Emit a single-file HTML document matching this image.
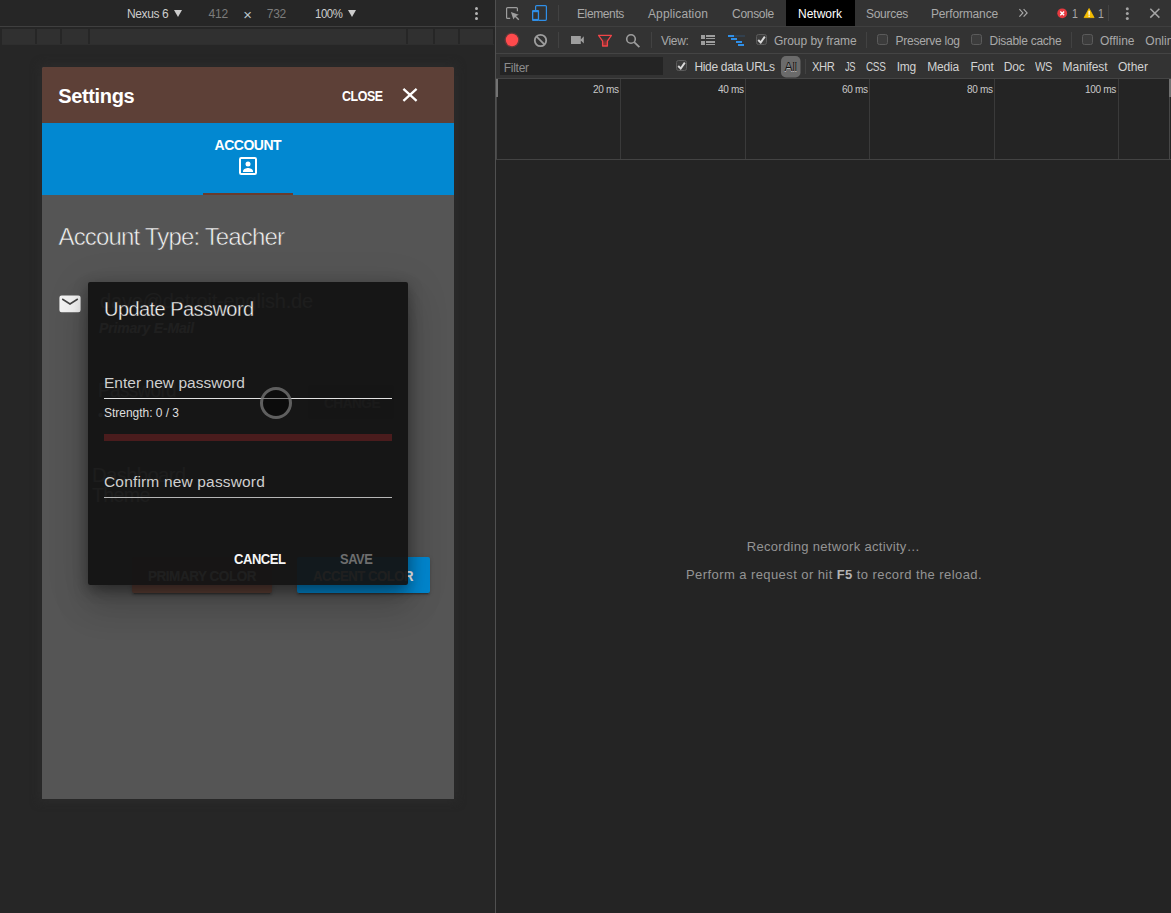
<!DOCTYPE html>
<html lang="en">
<head>
<meta charset="utf-8">
<title>Settings – Update Password (DevTools device mode)</title>
<style>
*{box-sizing:border-box;margin:0;padding:0}
html,body{width:1171px;height:913px;overflow:hidden;background:#262626}
body{position:relative;font-family:"Liberation Sans",sans-serif;-webkit-font-smoothing:antialiased}
.a{position:absolute}
.t{position:absolute;white-space:nowrap;line-height:20px;height:20px;font-family:"Liberation Sans",sans-serif}
.t b{font-weight:700}
#left{left:0;top:0;width:495px;height:913px;background:#262626;overflow:hidden}
#right{left:495px;top:0;width:676px;height:913px;background:#242424;border-left:1px solid #505050;overflow:hidden}
.seg{position:absolute;top:29px;height:15px;background:#303030}
.vsep{position:absolute;width:1px;background:#474747}
.cb{position:absolute;width:11px;height:11px;border:1px solid #5c5c5c;border-radius:2px;background:#3d3d3d}
.tri{position:absolute;width:0;height:0;border-left:4px solid transparent;border-right:4px solid transparent;border-top:7px solid #cdcdcd}
</style>
</head>
<body>
<!-- ================= LEFT: device emulation pane ================= -->
<div id="left" class="a">
  <div class="a" style="left:0;top:26px;width:495px;height:1px;background:#3f3f3f"></div>
  <!-- media query bar -->
  <div class="a" style="left:2px;top:44px;width:492px;height:1px;background:#2e2e2e"></div>
  <div class="seg" style="left:2px;width:33px"></div>
  <div class="seg" style="left:37px;width:23px"></div>
  <div class="seg" style="left:62px;width:26px"></div>
  <div class="seg" style="left:90px;width:316px"></div>
  <div class="seg" style="left:408px;width:25px"></div>
  <div class="seg" style="left:435px;width:23px"></div>
  <div class="seg" style="left:460px;width:33px"></div>
  <div class="tri" style="left:173.800px;top:9.700px"></div>
  <div class="tri" style="left:347.500px;top:9.700px"></div>
  <!-- kebab -->
  <svg class="a" style="left:474px;top:6px" width="5" height="15" viewBox="0 0 5 15"><circle cx="2.5" cy="2.5" r="1.5" fill="#b4b4b4"/><circle cx="2.5" cy="7.5" r="1.5" fill="#b4b4b4"/><circle cx="2.5" cy="12.5" r="1.5" fill="#b4b4b4"/></svg>

  <!-- device screen -->
  <div id="screen" class="a" style="left:42px;top:67px;width:412px;height:732px;background:#555555;border-radius:2px 2px 0 0;box-shadow:0 0 9px 3px rgba(44,44,44,.75);overflow:hidden">
    <div class="a" style="left:0;top:0;width:412px;height:56px;background:#5d4037"></div>
    <div class="a" style="left:0;top:56px;width:412px;height:72px;background:#0288d1"></div>
    <div class="a" style="left:161px;top:126px;width:90px;height:2px;background:#6a3b2d"></div>
    <!-- close X -->
    <svg class="a" style="left:356px;top:16px" width="24" height="24" viewBox="0 0 24 24"><path d="M5.400 5.900 L18.600 17.900 M18.600 5.900 L5.400 17.900" stroke="#fff" stroke-width="2.300" fill="none"/></svg>
    <!-- account box icon -->
    <svg class="a" style="left:194px;top:87px" width="24" height="24" viewBox="0 0 24 24"><rect x="4" y="4" width="16" height="16" rx="1.2" fill="none" stroke="#fff" stroke-width="2"/><circle cx="12" cy="10" r="2.500" fill="#fff"/><path d="M7 17.200 c0-2.300 3.300-3.200 5-3.200 s5 .9 5 3.200 V18 H7 Z" fill="#fff"/></svg>
    <!-- mail icon -->
    <svg class="a" style="left:17px;top:228px" width="22" height="18" viewBox="0 0 22 18"><rect x="0.4" y="0.6" width="21.2" height="16.6" rx="2.2" fill="#f4f4f4"/><path d="M3.2 4 L11 9 L18.8 4" stroke="#454545" stroke-width="1.5" fill="none"/></svg>
  </div>
</div>

<!-- underlying (ghost) page content, visible through the fading dialog -->
<div id="under" class="a" style="left:0;top:0;width:495px;height:913px;overflow:hidden">
  <div class="a" style="left:132px;top:557px;width:140px;height:36px;background:#5d4037;border-radius:2px;box-shadow:0 3px 1px -2px rgba(0,0,0,.2),0 2px 2px 0 rgba(0,0,0,.14),0 1px 5px 0 rgba(0,0,0,.12)"></div>
  <div class="a" style="left:297px;top:557px;width:133px;height:36px;background:#0288d1;border-radius:2px;box-shadow:0 3px 1px -2px rgba(0,0,0,.2),0 2px 2px 0 rgba(0,0,0,.14),0 1px 5px 0 rgba(0,0,0,.12)"></div>
  <div class="a" style="left:308px;top:384.500px;width:86px;height:34.500px;background:rgba(0,0,0,.2);border-radius:2px"></div>
<span class="t" id="g_mail" style="left:100.0px;top:291.0px;font-size:20px;color:#cfcfcf;letter-spacing:-0.179px;">dave@detroit-english.de</span>
<span class="t" id="g_prim" style="left:99.0px;top:318.0px;font-size:14px;color:#ffffff;font-weight:700;letter-spacing:-0.162px;font-style:italic;">Primary E-Mail</span>
<span class="t" id="g_pw" style="left:98.0px;top:380.0px;font-size:20px;color:#cfcfcf;letter-spacing:-0.700px;transform:scaleX(0.9488);transform-origin:0 50%;">Password</span>
<span class="t" id="g_dots" style="left:98.0px;top:405.0px;font-size:14px;color:#ffffff;letter-spacing:2.096px;">••••••</span>
<span class="t" id="g_change" style="left:324.4px;top:393.0px;font-size:14px;color:#9a9a9a;font-weight:700;letter-spacing:-0.490px;transform:scaleX(0.9700);transform-origin:0 50%;">CHANGE</span>
<span class="t" id="g_dash" style="left:92.0px;top:465.0px;font-size:21px;color:#cfcfcf;letter-spacing:-0.735px;transform:scaleX(0.9717);transform-origin:0 50%;">Dashboard</span>
<span class="t" id="g_theme" style="left:92.0px;top:485.0px;font-size:21px;color:#cfcfcf;letter-spacing:-0.735px;transform:scaleX(0.9338);transform-origin:0 50%;">Theme</span>
<span class="t" id="g_pc" style="left:148.0px;top:565.5px;font-size:14px;color:#ffffff;font-weight:700;letter-spacing:-0.490px;transform:scaleX(0.9655);transform-origin:0 50%;">PRIMARY COLOR</span>
<span class="t" id="g_ac" style="left:313.0px;top:565.5px;font-size:14px;color:#ffffff;font-weight:700;letter-spacing:-0.490px;transform:scaleX(0.9354);transform-origin:0 50%;">ACCENT COLOR</span>
</div>

<!-- the dialog -->
<div id="dialog" class="a" style="left:88px;top:282px;width:320px;height:303px;background:rgba(19,19,19,.95);border-radius:2px;box-shadow:0 4px 14px 1px rgba(0,0,0,.28),0 11px 15px -7px rgba(0,0,0,.2),0 22px 34px 3px rgba(0,0,0,.12),0 9px 40px 6px rgba(0,0,0,.09)"></div>
<div class="a" style="left:104px;top:398px;width:288px;height:1px;background:#e2e2e2"></div>
<div class="a" style="left:104px;top:434px;width:288px;height:7px;background:#4a1c1d"></div>
<div class="a" style="left:104px;top:497px;width:288px;height:1px;background:#b6b6b6"></div>
<div id="dlgtext" class="a" style="left:0;top:0;width:495px;height:913px;overflow:hidden">
<span class="t" id="upd" style="left:104.0px;top:299.0px;font-size:20px;color:#f4f4f4;letter-spacing:-0.552px;-webkit-text-stroke:0.35px #171717;">Update Password</span>
<span class="t" id="enter" style="left:104.0px;top:372.5px;font-size:15.5px;color:#cfcfcf;letter-spacing:0.031px;">Enter new password</span>
<span class="t" id="strength" style="left:104.0px;top:403.0px;font-size:12px;color:#dedede;letter-spacing:-0.026px;">Strength: 0 / 3</span>
<span class="t" id="confirm" style="left:104.0px;top:471.5px;font-size:15.5px;color:#cfcfcf;letter-spacing:0.167px;">Confirm new password</span>
<span class="t" id="cancel" style="left:234.3px;top:549.0px;font-size:14px;color:#f5f5f5;font-weight:700;letter-spacing:-0.490px;transform:scaleX(0.9295);transform-origin:0 50%;">CANCEL</span>
<span class="t" id="save" style="left:339.6px;top:549.0px;font-size:14px;color:#6e6e6e;font-weight:700;letter-spacing:-0.490px;transform:scaleX(0.9222);transform-origin:0 50%;">SAVE</span>
</div>
<!-- touch cursor -->
<div class="a" style="left:260px;top:387px;width:32px;height:32px;border-radius:50%;border:3px solid rgba(128,128,128,.72);background:rgba(0,0,0,.42)"></div>

<!-- ================= RIGHT: DevTools network panel ================= -->
<div id="right" class="a">
  <div class="a" style="left:0;top:0;width:676px;height:78px;background:#333333"></div>
  <div class="a" style="left:0;top:26px;width:676px;height:1px;background:#3f3f3f"></div>
  <div class="a" style="left:0;top:53px;width:676px;height:1px;background:#444444"></div>
  <div class="a" style="left:0;top:78px;width:676px;height:1px;background:#444444"></div>
  <div class="a" style="left:0;top:159px;width:676px;height:1px;background:#434343"></div>
  <!-- selected tab -->
  <div class="a" style="left:290px;top:0;width:69px;height:26px;background:#000"></div>
</div>

<!-- DevTools toolbar icons (page coordinates) -->
<svg id="icons" class="a" style="left:0;top:0" width="1171" height="80" viewBox="0 0 1171 80">
  <g fill="none" stroke="#9e9e9e" stroke-width="1.2">
    <!-- inspect element -->
    <path d="M517.4 11.2 V8.6 a1 1 0 0 0 -1 -1 H507.6 a1 1 0 0 0 -1 1 V17.4 a1 1 0 0 0 1 1 H510.2"/>
    <path d="M510.9 12 L518.8 14.7 L516 16 L519.3 19.3 L518.3 20.3 L515 17 L513.4 19.6 Z" fill="#9e9e9e" stroke="none"/>
    <!-- clear -->
    <circle cx="540.5" cy="40.5" r="5.7" stroke-width="1.8"/>
    <path d="M536.4 36.4 L544.6 44.6" stroke-width="1.8"/>
    <!-- search -->
    <circle cx="631" cy="39" r="4.300" stroke-width="1.600"/>
    <path d="M634.2 42.2 L639.4 47.2" stroke-width="1.800"/>
    <!-- more tabs chevrons -->
    <path d="M1019.4 9.2 L1022.9 12.9 L1019.4 16.6 M1023.6 9.2 L1027.1 12.9 L1023.6 16.6" stroke="#a8a8a8" stroke-width="1.2"/>
    <!-- close devtools -->
    <path d="M1150.3 8.8 L1159.4 17.6 M1159.4 8.8 L1150.3 17.6" stroke="#a4a4a4" stroke-width="1.5"/>
  </g>
  <!-- device toggle (active, blue) -->
  <g fill="none" stroke="#2f8fe8" stroke-width="1.2">
    <path d="M535.6 10 V6.6 a1 1 0 0 1 1 -1 H545.4 a1 1 0 0 1 1 1 V19.3 a1 1 0 0 1 -1 1 H539"/>
    <rect x="532" y="10" width="7.1" height="11" rx="1" fill="#2f8fe8" stroke="none"/>
    <rect x="533.3" y="12.2" width="4.5" height="6.7" fill="#333" stroke="none"/>
  </g>
  <!-- separators -->
  <g fill="#424242">
    <rect x="558" y="5" width="1" height="16"/>
    <rect x="1108" y="5" width="1" height="16"/>
    <rect x="558" y="32" width="1" height="16"/>
    <rect x="651" y="32" width="1" height="16"/>
    <rect x="866" y="32" width="1" height="16"/>
    <rect x="1071" y="32" width="1" height="16"/>
    <rect x="805" y="59" width="1" height="15"/>
  </g>
  <!-- record -->
  <circle cx="512" cy="40" r="7.6" fill="#ff4a4c" opacity=".22"/>
  <circle cx="512" cy="40" r="6.2" fill="#ff4a4c"/>
  <!-- camera -->
  <path d="M571 36 H580.8 V39.4 L583.8 36.2 V43.6 L580.8 40.6 V44 H571 Z" fill="#9e9e9e"/>
  <!-- filter funnel -->
  <defs><linearGradient id="fg" x1="0" y1="0" x2="0" y2="1"><stop offset="0.250" stop-color="#333333"/><stop offset="0.750" stop-color="#8e3033"/></linearGradient></defs>
  <path d="M598.6 35.4 H611.4 L607.4 41.2 V46 H602.6 V41.2 Z" fill="url(#fg)" stroke="#f04548" stroke-width="1.3" stroke-linejoin="round"/>
  <!-- list view -->
  <g fill="#9e9e9e">
    <rect x="701" y="35" width="4" height="4"/><rect x="701" y="41" width="4" height="4"/>
    <rect x="706" y="35" width="9" height="2"/><rect x="706" y="38" width="9" height="1"/>
    <rect x="706" y="41" width="9" height="2"/><rect x="706" y="44" width="9" height="1"/>
  </g>
  <!-- waterfall view (active) -->
  <g fill="#2f8fe8">
    <rect x="728" y="35" width="6" height="2"/><rect x="731" y="38" width="6" height="2"/>
    <rect x="736" y="41" width="6" height="2"/><rect x="738" y="44" width="6" height="2"/>
    <rect x="734" y="35.5" width="11" height="1" opacity=".3"/>
  </g>
  <!-- checkboxes -->
  <g fill="#3c3c3c" stroke="#5b5b5b" stroke-width="1">
    <rect x="756.5" y="34.5" width="10" height="10" rx="2"/>
    <rect x="877.5" y="34.5" width="10" height="10" rx="2"/>
    <rect x="971.5" y="34.5" width="10" height="10" rx="2"/>
    <rect x="1082.5" y="34.5" width="10" height="10" rx="2"/>
    <rect x="676.5" y="60.500" width="10" height="10" rx="2"/>
  </g>
  <g fill="none" stroke="#dadada" stroke-width="1.9">
    <path d="M758.2 40 L760.7 42.500 L764.8 36.600"/>
    <path d="M678.2 66 L680.7 68.500 L684.8 62.600"/>
  </g>
  <!-- All pill -->
  <rect x="781" y="56" width="19.500" height="21.500" rx="5" fill="#6b6b6b"/>
  <!-- error / warning counters -->
  <circle cx="1062.200" cy="13.300" r="4.900" fill="#e5393f"/>
  <path d="M1060.300 11.400 L1064.100 15.200 M1064.100 11.400 L1060.300 15.200" stroke="#fff" stroke-width="1.400" fill="none"/>
  <path d="M1089.100 8.500 L1094.100 17.600 H1084.100 Z" fill="#f5bd00" stroke="#f5bd00" stroke-width=".8" stroke-linejoin="round"/>
  <rect x="1088.500" y="10.800" width="1.300" height="4" fill="#fff"/><rect x="1088.500" y="15.600" width="1.300" height="1.300" fill="#fff"/>
  <!-- devtools kebab -->
  <g fill="#a4a4a4"><circle cx="1127.300" cy="8.800" r="1.500"/><circle cx="1127.300" cy="13.500" r="1.500"/><circle cx="1127.300" cy="18.400" r="1.500"/></g>
</svg>
<!-- filter input + timeline grid -->
<div class="a" style="left:500px;top:57px;width:163px;height:18px;background:#242424"></div>
<div class="a" style="left:496px;top:79px;width:2px;height:18px;background:#747474"></div>
<div class="vsep" style="left:496px;top:97px;height:62px;background:#474747"></div>
<div class="vsep" style="left:620px;top:79px;height:80px;background:#3a3a3a"></div>
<div class="vsep" style="left:745px;top:79px;height:80px;background:#3a3a3a"></div>
<div class="vsep" style="left:869px;top:79px;height:80px;background:#3a3a3a"></div>
<div class="vsep" style="left:994px;top:79px;height:80px;background:#3a3a3a"></div>
<div class="vsep" style="left:1118px;top:79px;height:80px;background:#3a3a3a"></div>
<div class="a" style="left:1169px;top:79px;width:2px;height:18px;background:#707070"></div>
<div class="vsep" style="left:1169px;top:97px;height:62px;background:#474747"></div>
<div id="rt" class="a" style="left:0;top:0;width:1171px;height:913px;overflow:hidden;pointer-events:none">
<span class="t" id="nexus" style="left:127.0px;top:4.0px;font-size:12px;color:#cdcdcd;letter-spacing:-0.376px;">Nexus 6</span>
<span class="t" id="w412" style="left:208.6px;top:4.0px;font-size:12px;color:#7c7c7c;letter-spacing:-0.277px;">412</span>
<span class="t" id="times" style="left:243.2px;top:4.5px;font-size:15px;color:#bcc4ca;letter-spacing:0.034px;">×</span>
<span class="t" id="h732" style="left:266.8px;top:4.0px;font-size:12px;color:#7c7c7c;letter-spacing:-0.277px;">732</span>
<span class="t" id="z100" style="left:315.3px;top:4.0px;font-size:12px;color:#cdcdcd;letter-spacing:-0.420px;transform:scaleX(0.9475);transform-origin:0 50%;">100%</span>
<span class="t" id="tEl" style="left:577.0px;top:4.0px;font-size:12px;color:#a9a9a9;letter-spacing:-0.379px;">Elements</span>
<span class="t" id="tAp" style="left:648.0px;top:4.0px;font-size:12px;color:#a9a9a9;letter-spacing:0.116px;">Application</span>
<span class="t" id="tCo" style="left:732.0px;top:4.0px;font-size:12px;color:#a9a9a9;letter-spacing:-0.290px;">Console</span>
<span class="t" id="tNe" style="left:798.0px;top:4.0px;font-size:12px;color:#ffffff;letter-spacing:-0.002px;">Network</span>
<span class="t" id="tSo" style="left:866.0px;top:4.0px;font-size:12px;color:#a9a9a9;letter-spacing:-0.290px;">Sources</span>
<span class="t" id="tPe" style="left:931.0px;top:4.0px;font-size:12px;color:#a9a9a9;letter-spacing:-0.155px;">Performance</span>
<span class="t" id="e1" style="left:1071.5px;top:4.0px;font-size:12px;color:#a9a9a9;letter-spacing:-0.420px;transform:scaleX(0.8775);transform-origin:0 50%;">1</span>
<span class="t" id="w1" style="left:1097.5px;top:4.0px;font-size:12px;color:#a9a9a9;letter-spacing:-0.420px;transform:scaleX(0.8775);transform-origin:0 50%;">1</span>
<span class="t" id="view" style="left:661.0px;top:31.0px;font-size:12px;color:#a9a9a9;letter-spacing:-0.328px;">View:</span>
<span class="t" id="gbf" style="left:774.0px;top:31.0px;font-size:12px;color:#a9a9a9;letter-spacing:-0.048px;">Group by frame</span>
<span class="t" id="plog" style="left:895.6px;top:31.0px;font-size:12px;color:#a9a9a9;letter-spacing:-0.265px;">Preserve log</span>
<span class="t" id="dcache" style="left:989.6px;top:31.0px;font-size:12px;color:#a9a9a9;letter-spacing:-0.283px;">Disable cache</span>
<span class="t" id="offl" style="left:1100.0px;top:31.0px;font-size:12px;color:#a9a9a9;letter-spacing:0.004px;">Offline</span>
<span class="t" id="onl" style="left:1145.3px;top:31.0px;font-size:12px;color:#a9a9a9;letter-spacing:0.002px;">Online</span>
<span class="t" id="filter" style="left:503.7px;top:58.0px;font-size:12px;color:#8c8c8c;letter-spacing:-0.262px;">Filter</span>
<span class="t" id="hide" style="left:694.4px;top:57.0px;font-size:12px;color:#d2d2d2;letter-spacing:-0.323px;">Hide data URLs</span>
<span class="t" id="all" style="left:784.5px;top:57.0px;font-size:12px;color:#111;letter-spacing:-0.281px;text-shadow:0 1px 0 rgba(255,255,255,.55);">All</span>
<span class="t" id="xhr" style="left:812.3px;top:57.0px;font-size:12px;color:#d2d2d2;letter-spacing:-0.420px;transform:scaleX(0.9342);transform-origin:0 50%;">XHR</span>
<span class="t" id="js" style="left:845.0px;top:57.0px;font-size:12px;color:#d2d2d2;letter-spacing:-0.420px;transform:scaleX(0.7817);transform-origin:0 50%;">JS</span>
<span class="t" id="css" style="left:866.3px;top:57.0px;font-size:12px;color:#d2d2d2;letter-spacing:-0.420px;transform:scaleX(0.8324);transform-origin:0 50%;">CSS</span>
<span class="t" id="img" style="left:896.7px;top:57.0px;font-size:12px;color:#d2d2d2;letter-spacing:-0.239px;">Img</span>
<span class="t" id="media" style="left:927.3px;top:57.0px;font-size:12px;color:#d2d2d2;letter-spacing:-0.197px;">Media</span>
<span class="t" id="font" style="left:970.4px;top:57.0px;font-size:12px;color:#d2d2d2;letter-spacing:-0.154px;">Font</span>
<span class="t" id="doc" style="left:1003.8px;top:57.0px;font-size:12px;color:#d2d2d2;letter-spacing:-0.215px;">Doc</span>
<span class="t" id="ws" style="left:1035.0px;top:57.0px;font-size:12px;color:#d2d2d2;letter-spacing:-0.420px;transform:scaleX(0.9187);transform-origin:0 50%;">WS</span>
<span class="t" id="manif" style="left:1062.6px;top:57.0px;font-size:12px;color:#d2d2d2;letter-spacing:-0.057px;">Manifest</span>
<span class="t" id="other" style="left:1118.0px;top:57.0px;font-size:12px;color:#d2d2d2;letter-spacing:-0.003px;">Other</span>
<span class="t" id="ms0" style="left:592.8px;top:79.0px;font-size:11px;color:#c8c8c8;letter-spacing:-0.385px;transform:scaleX(0.9129);transform-origin:0 50%;">20 ms</span>
<span class="t" id="ms1" style="left:717.6px;top:79.0px;font-size:11px;color:#c8c8c8;letter-spacing:-0.385px;transform:scaleX(0.9129);transform-origin:0 50%;">40 ms</span>
<span class="t" id="ms2" style="left:842.2px;top:79.0px;font-size:11px;color:#c8c8c8;letter-spacing:-0.385px;transform:scaleX(0.9129);transform-origin:0 50%;">60 ms</span>
<span class="t" id="ms3" style="left:967.0px;top:79.0px;font-size:11px;color:#c8c8c8;letter-spacing:-0.385px;transform:scaleX(0.9129);transform-origin:0 50%;">80 ms</span>
<span class="t" id="ms4" style="left:1085.4px;top:79.0px;font-size:11px;color:#c8c8c8;letter-spacing:-0.385px;transform:scaleX(0.9180);transform-origin:0 50%;">100 ms</span>
<span class="t" id="rec" style="left:746.7px;top:536.5px;font-size:13px;color:#949494;letter-spacing:0.317px;">Recording network activity…</span>
<span class="t" id="perf" style="left:686.0px;top:564.5px;font-size:13px;color:#949494;letter-spacing:0.422px;">Perform a request or hit <b style="color:#b4b4b4">F5</b> to record the reload.</span>
<span class="t" id="settings" style="left:58.2px;top:85.5px;font-size:20px;color:#ffffff;font-weight:700;letter-spacing:-0.351px;">Settings</span>
<span class="t" id="close" style="left:341.6px;top:86.0px;font-size:14px;color:#ffffff;font-weight:700;letter-spacing:-0.490px;transform:scaleX(0.8868);transform-origin:0 50%;">CLOSE</span>
<span class="t" id="account" style="left:214.6px;top:135.0px;font-size:14px;color:#ffffff;font-weight:700;letter-spacing:-0.490px;">ACCOUNT</span>
<span class="t" id="acctype" style="left:58.5px;top:227.0px;font-size:24px;color:#f4f4f4;letter-spacing:-0.840px;-webkit-text-stroke:0.55px #555555;">Account Type: Teacher</span>
</div>
</body>
</html>
